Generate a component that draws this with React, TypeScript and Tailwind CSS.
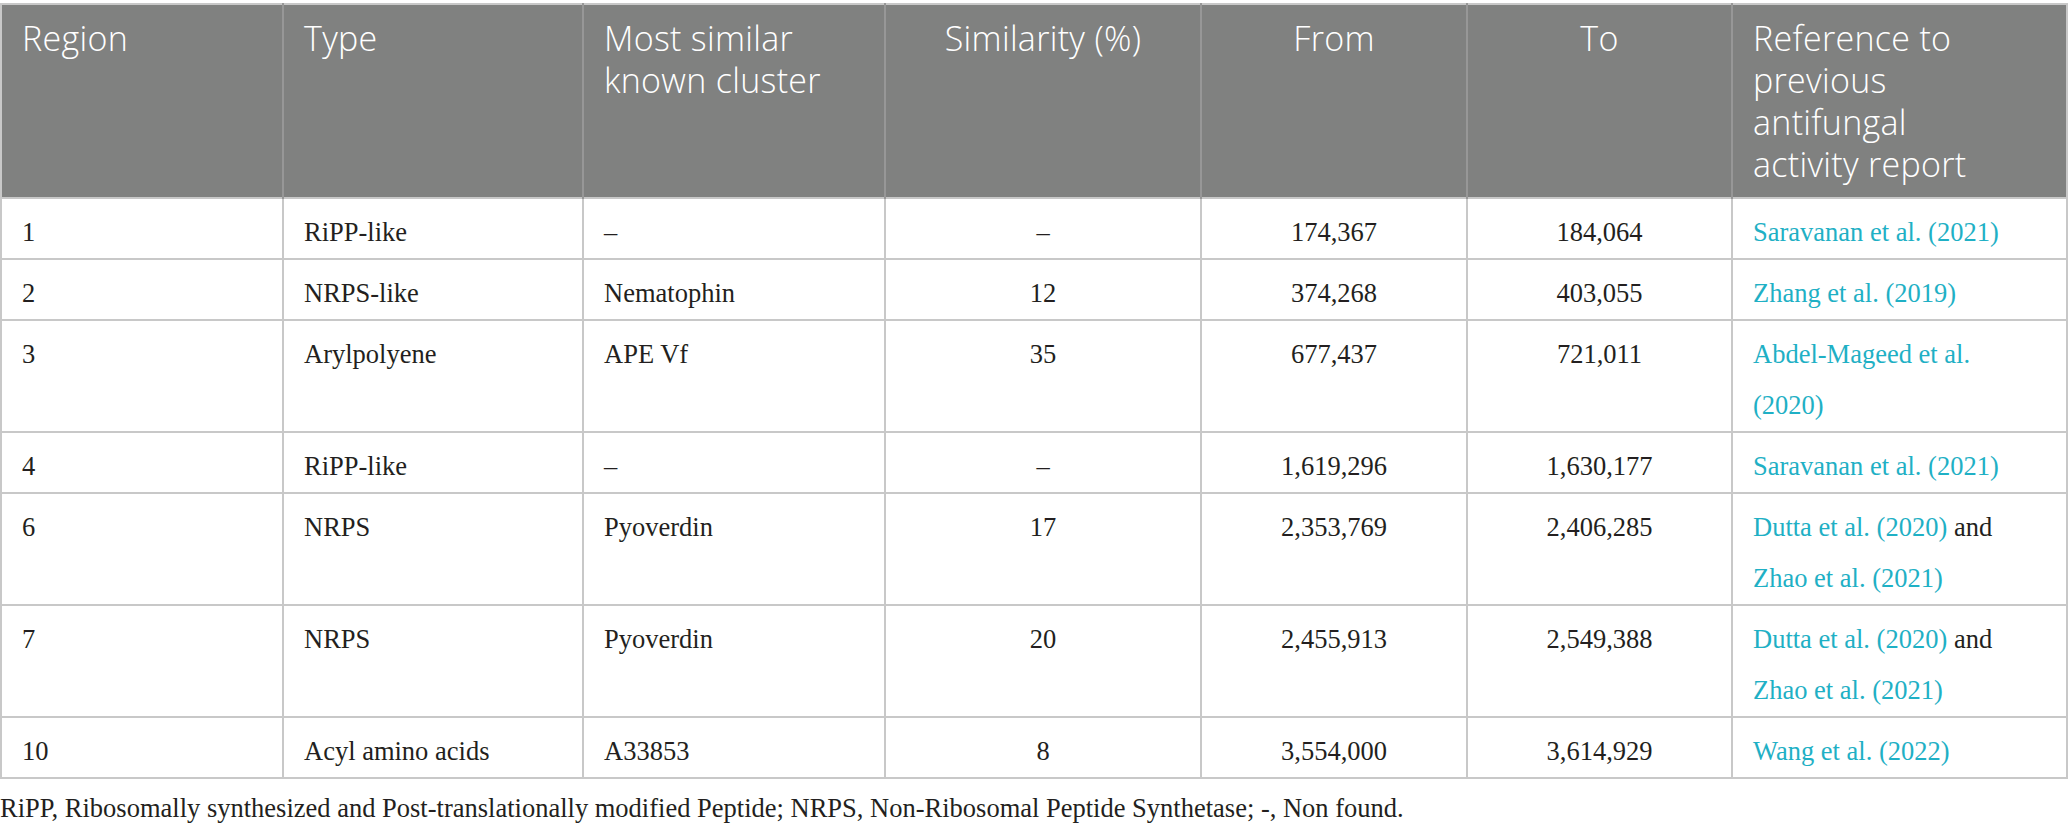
import React from 'react'

type Cite = { text: string; link?: boolean }

type Row = {
  region: string
  type: string
  cluster: string
  similarity: string
  from: string
  to: string
  refs: Cite[]
}

const rows: Row[] = [
  { region: '1', type: 'RiPP-like', cluster: '–', similarity: '–', from: '174,367', to: '184,064', refs: [{ text: 'Saravanan et al. (2021)', link: true }] },
  { region: '2', type: 'NRPS-like', cluster: 'Nematophin', similarity: '12', from: '374,268', to: '403,055', refs: [{ text: 'Zhang et al. (2019)', link: true }] },
  { region: '3', type: 'Arylpolyene', cluster: 'APE Vf', similarity: '35', from: '677,437', to: '721,011', refs: [{ text: 'Abdel-Mageed et al. (2020)', link: true }] },
  { region: '4', type: 'RiPP-like', cluster: '–', similarity: '–', from: '1,619,296', to: '1,630,177', refs: [{ text: 'Saravanan et al. (2021)', link: true }] },
  {
    region: '6', type: 'NRPS', cluster: 'Pyoverdin', similarity: '17', from: '2,353,769', to: '2,406,285',
    refs: [{ text: 'Dutta et al. (2020)', link: true }, { text: ' and ' }, { text: 'Zhao et al. (2021)', link: true }],
  },
  {
    region: '7', type: 'NRPS', cluster: 'Pyoverdin', similarity: '20', from: '2,455,913', to: '2,549,388',
    refs: [{ text: 'Dutta et al. (2020)', link: true }, { text: ' and ' }, { text: 'Zhao et al. (2021)', link: true }],
  },
  { region: '10', type: 'Acyl amino acids', cluster: 'A33853', similarity: '8', from: '3,554,000', to: '3,614,929', refs: [{ text: 'Wang et al. (2022)', link: true }] },
]

const th = 'border-x-2 border-[#979797] px-[20px] pt-[12px] pb-[12px] align-top font-light'
const td = 'border-2 border-[#c8c8c8] px-[20px] pt-[8px] pb-0 align-top'

export default function App() {
  return (
    <div className="w-[2068px] bg-white pt-[3px]">
      <table className="w-[2066px] table-fixed border-collapse border-2 border-[#c8c8c8]">
        <colgroup>
          <col className="w-[282px]" />
          <col className="w-[300px]" />
          <col className="w-[302px]" />
          <col className="w-[316px]" />
          <col className="w-[266px]" />
          <col className="w-[265px]" />
          <col className="w-[335px]" />
        </colgroup>
        <thead>
          <tr className="bg-[#808180] text-white font-['Open_Sans',sans-serif] text-[34px] leading-[42px] tracking-[0.3px]">
            <th className={`${th} border-l-0 text-left`}>Region</th>
            <th className={`${th} text-left`}>Type</th>
            <th className={`${th} text-left`}>Most similar<br />known cluster</th>
            <th className={`${th} text-center`}>Similarity (%)</th>
            <th className={`${th} text-center`}>From</th>
            <th className={`${th} text-center`}>To</th>
            <th className={`${th} border-r-0 text-left`}>
              Reference to<br />previous<br />antifungal<br />activity report
            </th>
          </tr>
        </thead>
        <tbody className="font-['Liberation_Serif',serif] text-[26.5px] leading-[51px] text-[#231f20]">
          {rows.map((r) => (
            <tr key={r.region}>
              <td className={`${td} text-left`}>{r.region}</td>
              <td className={`${td} text-left`}>{r.type}</td>
              <td className={`${td} text-left`}>{r.cluster}</td>
              <td className={`${td} text-center`}>{r.similarity}</td>
              <td className={`${td} text-center`}>{r.from}</td>
              <td className={`${td} text-center`}>{r.to}</td>
              <td className={`${td} text-left`}>
                {r.refs.map((c, i) =>
                  c.link ? (
                    <span key={i} className="text-[#1fb0c5]">{c.text}</span>
                  ) : (
                    <span key={i}>{c.text}</span>
                  )
                )}
              </td>
            </tr>
          ))}
        </tbody>
      </table>
      <p className="mt-[12px] font-['Liberation_Serif',serif] text-[26.5px] leading-[34px] text-[#231f20]">
        RiPP, Ribosomally synthesized and Post-translationally modified Peptide; NRPS, Non-Ribosomal Peptide Synthetase; -, Non found.
      </p>
    </div>
  )
}
